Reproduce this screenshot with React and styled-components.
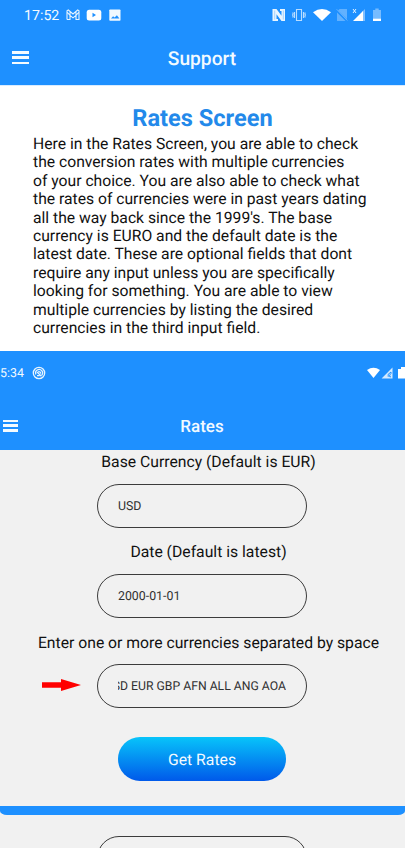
import React from "react";
import styled, { createGlobalStyle } from "styled-components";

const GlobalStyle = createGlobalStyle`
  * { box-sizing: border-box; }
  body {
    margin: 0;
    background: #f1f1f1;
    font-family: Roboto, sans-serif;
    text-rendering: geometricPrecision;
  }
`;

const Page = styled.main`
  width: 405px;
  height: 848px;
  overflow: hidden;
  display: flex;
  flex-direction: column;
  background: #f1f1f1;
  color: #111;
`;

const Header = styled.header`
  flex: none;
  height: ${(p) => p.$height}px;
  background: #1e90ff;
  color: #f2faff;
  display: flex;
  flex-direction: column;
`;

const StatusBar = styled.div`
  height: ${(p) => p.$height}px;
  padding: ${(p) => p.$padding};
  display: flex;
  justify-content: space-between;
`;

const StatusGroup = styled.div`
  display: flex;
  align-items: center;
`;

const Clock = styled.span`
  font-size: ${(p) => p.$size}px;
  line-height: 16px;
  white-space: nowrap;
  padding-top: 1px;
`;

const StatusIcon = styled.svg`
  flex: none;
  display: block;
  margin-left: ${(p) => p.$gap || 0}px;
`;

const NavBar = styled.div`
  height: ${(p) => p.$height}px;
  padding-left: ${(p) => p.$left}px;
  padding-top: ${(p) => p.$top || 0}px;
  display: grid;
  grid-template-columns: 20px 1fr;
  align-items: center;
`;

const MenuButton = styled.button`
  width: ${(p) => p.$width}px;
  height: ${(p) => p.$height}px;
  padding: 0;
  border: 0;
  background: none;
  display: flex;
  flex-direction: column;
  justify-content: space-between;
`;

const MenuLine = styled.span`
  width: 100%;
  height: 2.5px;
  background: #f4fbff;
`;

const NavTitle = styled.h1`
  margin: 0 ${(p) => p.$right}px 0 0;
  padding-top: 2px;
  text-align: center;
  font-size: ${(p) => p.$size}px;
  line-height: 24px;
  font-weight: 500;
`;

const Article = styled.section`
  flex: none;
  height: 266px;
  padding: 17px 0 0 33px;
  background: #fff;
  border-top: 1px solid #d9ecff;
`;

const ArticleTitle = styled.h2`
  margin: 0 33px 2px 0;
  text-align: center;
  color: #2389ea;
  font-size: 23.6px;
  line-height: 30px;
  font-weight: 700;
`;

const ArticleText = styled.p`
  margin: 0;
  font-size: 15.7px;
  line-height: 18.4px;
  white-space: pre;
`;

const Form = styled.form`
  flex: none;
  height: 356px;
  display: flex;
  flex-direction: column;
  align-items: center;
  padding-top: 1px;
`;

const Label = styled.label`
  height: 22px;
  padding-left: 12px;
  font-size: 15.72px;
  line-height: ${(p) => p.$line || 22}px;
  white-space: nowrap;
`;

const FieldRow = styled.div`
  width: 100%;
  height: 44px;
  margin: ${(p) => p.$margin};
  display: grid;
  grid-template-columns: 97px 210px;
  align-items: center;
`;

const Field = styled.div`
  grid-column: 2;
  height: 44px;
  padding: 1px 20px 0;
  border: 1px solid #3c3c3c;
  border-radius: 22px;
  display: flex;
  align-items: center;
`;

const FieldValue = styled.span`
  flex: 1;
  display: flex;
  justify-content: ${(p) => (p.$scrolled ? "flex-end" : "flex-start")};
  overflow: hidden;
  white-space: nowrap;
  color: #303030;
  font-size: ${(p) => (p.$scrolled ? 12.22 : 12.35)}px;
  line-height: ${(p) => (p.$scrolled ? 19 : 18)}px;
  padding-top: ${(p) => (p.$scrolled ? 0 : 1)}px;
`;

const Arrow = styled.svg`
  display: block;
  margin: 0 0 2px 42px;
`;

const SubmitButton = styled.button`
  width: 168px;
  height: 44px;
  margin: 29px 1px 0 0;
  padding: 2px 0 0;
  border: 0;
  border-radius: 22px;
  background: linear-gradient(#08c4fa, #0059ea);
  color: #f2faff;
  font: 400 15.75px/20px Roboto, sans-serif;
  text-rendering: geometricPrecision;
`;

const Divider = styled.div`
  flex: none;
  height: 9px;
  background: #1e90ff;
  border-radius: 0 0 7px 7px / 0 0 4px 4px;
`;

const NextSection = styled.div`
  padding: 21px 0 0 97px;
  display: grid;
  grid-template-columns: 0 210px;
`;

function Menu({ width, height }) {
  return (
    <MenuButton type="button" aria-label="Menu" $width={width} $height={height}>
      <MenuLine />
      <MenuLine />
      <MenuLine />
    </MenuButton>
  );
}

export default function App() {
  return (
    <Page>
      <GlobalStyle />
      <Header $height={85}>
        <StatusBar $height={30} $padding="0 24px 0 24px">
          <StatusGroup>
            <Clock $size={14.2}>17:52</Clock>
            <StatusIcon $gap={7} width="14" height="12" viewBox="0 0 14 12" fill="none" stroke="#e5f3ff" strokeWidth="1.1">
              <path d="M1 10.5V1.8L2.3 1 7 5 11.7 1 13 1.8v8.7h-3V6.3L7 8.8 4 6.3v4.2H1M1 3l3 3.3M13 3l-3 3.3M4 3.3v3M10 3.3v3" />
            </StatusIcon>
            <StatusIcon $gap={6} width="16" height="12" viewBox="0 0 16 12">
              <rect x=".7" y=".8" width="14.6" height="10.6" rx="2.5" fill="#fff" />
              <path d="M6.5 3.8v4.4L10 6z" fill="#1e90ff" />
            </StatusIcon>
            <StatusIcon $gap={7} width="12" height="12" viewBox="0 0 12 12">
              <rect x=".3" y=".5" width="11.2" height="11.2" rx=".8" fill="#f1f9ff" />
              <path d="M2 9.4 4.1 7.2l1.5 1.2L7.9 6.3 10.4 9.4z" fill="#1e90ff" />
            </StatusIcon>
          </StatusGroup>
          <StatusGroup>
            <StatusIcon width="14" height="14" viewBox="0 0 14 14" fill="none">
              <path d="M.5 1h4l5 6.7V3H8V1h5v12H9.5l-5-6.7V11H6v2H.5z" fill="#e9f5ff" />
              <path d="M2.7 2.5v9M11.3 2.5v9" stroke="#74bbff" strokeWidth=".6" />
            </StatusIcon>
            <StatusIcon $gap={6} width="14" height="14" viewBox="0 0 14 14" fill="none" stroke="#b9ddff" strokeWidth="1.1">
              <path d="M4.5 1.5h5v11h-5zM2.5 4v6M11.5 4v6M.7 4.5 1.2 6l-.7 1 .7 1-.5 1.5M13.3 4.5 12.8 6l.7 1-.7 1 .5 1.5" />
            </StatusIcon>
            <StatusIcon $gap={7} width="18" height="14" viewBox="0 0 18 14">
              <path d="M0 4.3Q9-2.5 18 4.3L9 13z" fill="#fff" />
            </StatusIcon>
            <StatusIcon $gap={5} width="12" height="14" viewBox="0 0 12 14">
              <path d="M3.6 1H11v10.3L2.1 2.5zM1 4.5 9.5 13H1z" fill="#62b1ff" />
              <path d="m.6 1.2 10.8 11.3" stroke="#73b9ff" strokeWidth=".8" />
            </StatusIcon>
            <StatusIcon $gap={4} width="14" height="14" viewBox="0 0 14 14">
              <path d="M13 1v12h-3V4z" fill="#80c0ff" />
              <path d="M1 13 11 3v10z" fill="#fff" />
              <path d="m1 1 3 4M4 1 1 5" stroke="#e5f4ff" />
            </StatusIcon>
            <StatusIcon $gap={7} width="8" height="14" viewBox="0 0 8 14">
              <path d="M2.3.5h3.4V2H8v9H0V2h2.3z" fill="#76bbff" />
              <path d="M0 10.7h8V13H0z" fill="#fff" />
            </StatusIcon>
          </StatusGroup>
        </StatusBar>
        <NavBar $height={55} $left={12}>
          <Menu width={17} height={13} />
          <NavTitle $right={33} $size={19.2}>Support</NavTitle>
        </NavBar>
      </Header>
      <Article>
        <ArticleTitle>Rates Screen</ArticleTitle>
        <ArticleText>{`Here in the Rates Screen, you are able to check
the conversion rates with multiple currencies
of your choice. You are also able to check what
the rates of currencies were in past years dating
all the way back since the 1999's. The base
currency is EURO and the default date is the
latest date. These are optional fields that dont
require any input unless you are specifically
looking for something. You are able to view
multiple currencies by listing the desired
currencies in the third input field.`}</ArticleText>
      </Article>
      <Header $height={99}>
        <StatusBar $height={44} $padding="0">
          <StatusGroup>
            <Clock $size={12.4}>5:34</Clock>
            <StatusIcon $gap={8} width="14" height="14" viewBox="0 0 14 14" fill="none" stroke="#e8f5ff">
              <circle cx="7" cy="7" r="5.7" strokeWidth="1.3" />
              <path d="M3.9 8.4A3.5 3.5 0 1 1 9.7 9.3M5 6l4.4 4.2M5 9.7h2.6M6.2 5.7c1.5-.3 2.4.6 2.5 1.9" strokeWidth="1.2" />
            </StatusIcon>
          </StatusGroup>
          <StatusGroup>
            <StatusIcon width="13" height="12" viewBox="0 0 13 12">
              <path d="M0 3Q6.5-1.5 13 3L6.5 11z" fill="#fff" />
            </StatusIcon>
            <StatusIcon $gap={1} width="12" height="12" viewBox="0 0 12 12">
              <path d="M.6 11.5 11.5.6v10.9z" fill="#d4eaff" />
              <path d="M7.2 9.8V7.3L10 5v1.5L8.7 8v1.8H10" fill="none" stroke="#1e90ff" />
            </StatusIcon>
            <StatusIcon $gap={5} width="7" height="12" viewBox="0 0 7 12">
              <path d="M3 0h4v11.5H0V2h3z" fill="#fff" />
            </StatusIcon>
          </StatusGroup>
        </StatusBar>
        <NavBar $height={55} $left={3} $top={6}>
          <Menu width={15} height={12} />
          <NavTitle $right={24} $size={17}>Rates</NavTitle>
        </NavBar>
      </Header>
      <Form>
        <Label>Base Currency (Default is EUR)</Label>
        <FieldRow $margin="11px 0 13px">
          <Field><FieldValue>USD</FieldValue></Field>
        </FieldRow>
        <Label>Date (Default is latest)</Label>
        <FieldRow $margin="11px 0 13px">
          <Field><FieldValue>2000-01-01</FieldValue></Field>
        </FieldRow>
        <Label $line={23}>Enter one or more currencies separated by space</Label>
        <FieldRow $margin="11px 0 0">
          <Arrow width="39" height="12" viewBox="0 0 39 12">
            <path d="M0 3.2h19V0l20 6-20 6V8.8H0z" fill="#f00" />
          </Arrow>
          <Field><FieldValue $scrolled>USD EUR GBP AFN ALL ANG AOA</FieldValue></Field>
        </FieldRow>
        <SubmitButton type="button">Get Rates</SubmitButton>
      </Form>
      <Divider />
      <NextSection><Field /></NextSection>
    </Page>
  );
}
